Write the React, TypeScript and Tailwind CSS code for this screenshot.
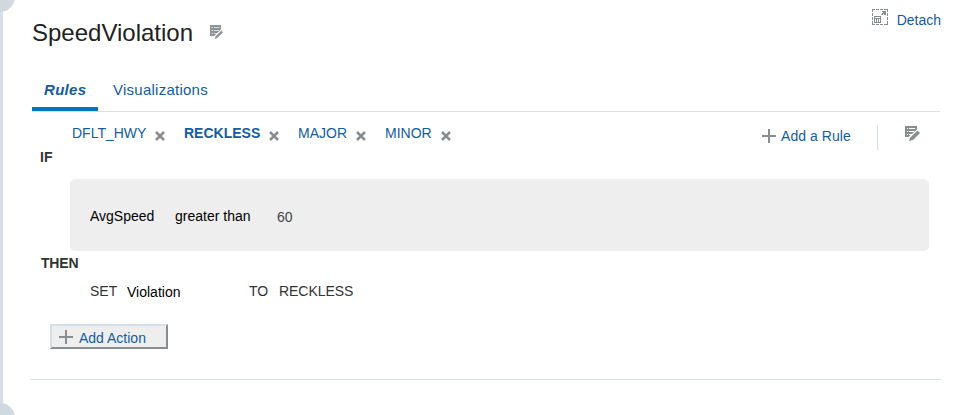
import React from "react";

function EditIcon({ className }: { className?: string }) {
  return (
    <svg className={className} viewBox="0 0 15 15" fill="none">
      <path d="M0 0H12V5L5 11H0Z" fill="#878d91" />
      <path d="M2 2.5h1M4 2.5h6M2 5.5h1M4 5.5h5M2 8.5h1M4 8.5h3" stroke="#fff" strokeWidth="1" />
      <path d="M12.2 3.2L15.6 6.4L8 15H3V11.5Z" fill="#fff" />
      <path d="M12.6 4.6L15 7L8 14L4 15L5 11.8Z" fill="#878d91" />
    </svg>
  );
}

function TitleEditIcon({ className }: { className?: string }) {
  return (
    <svg className={className} viewBox="0 0 13 14" fill="none">
      <path d="M0 0H11V5L5 11H0Z" fill="#8f9497" />
      <path d="M1.5 2.5h1.5M4 2.5h5.5M1.5 5.5h1.5M4 5.5h5M1.5 8.5h1.5M4 8.5h3" stroke="#d5d8da" strokeWidth="1" />
      <path d="M12 3.6L14 6L7.5 14H3.6V11.5Z" fill="#fff" />
      <path d="M11.4 5.6L13 7.2L7 13.2L4.8 14L5.4 11.6Z" fill="#8f9497" />
    </svg>
  );
}

function DetachIcon() {
  return (
    <svg className="h-4 w-4 shrink-0" viewBox="0 0 16 16" fill="#878d91" shapeRendering="crispEdges">
      <path d="M0 0h3v1H1v2H0ZM4 0h3v1H4ZM8 0h3v1H8ZM12 0h4v3h-1V1h-3ZM0 4h1v3H0ZM0 8h1v3H0ZM15 4h1v3h-1ZM15 8h1v3h-1ZM0 12h1v3h2v1H0ZM4 15h3v1H4ZM8 15h3v1H8ZM15 12h1v4h-4v-1h3Z" />
      <path fillRule="evenodd" d="M2 7h7v7H2ZM3 8v1h5V8ZM3 10v3h1v-3ZM5 10v3h1v-3ZM7 10v3h1v-3Z" />
      <path d="M10 2h4v4h-2V5h-1v1H9V5h1V4h1V3h-1Z" />
    </svg>
  );
}

function CloseIcon() {
  return (
    <svg className="mt-2 h-[10px] w-[10px] shrink-0" viewBox="0 0 10 10">
      <path d="M1 1L9 9M9 1L1 9" stroke="#878d91" strokeWidth="2.5" />
    </svg>
  );
}

function PlusIcon() {
  return (
    <svg className="h-[14px] w-[14px] shrink-0" viewBox="0 0 14 14" shapeRendering="crispEdges">
      <path d="M6 0h2v14H6ZM0 6h14v2H0Z" fill="#878d91" />
    </svg>
  );
}

function RuleTab({ name, width, active }: { name: string; width: string; active?: boolean }) {
  return (
    <div className="flex shrink-0 items-start">
      <span className={`${width} whitespace-nowrap ${active ? "font-bold" : ""}`}>{name}</span>
      <CloseIcon />
    </div>
  );
}

export default function App() {
  return (
    <div className="flex h-[415px] w-[957px] overflow-hidden bg-white font-['Liberation_Sans',Arial,sans-serif] text-sm leading-5 text-[#333]">
      <div className="relative w-[3px] shrink-0 bg-[#d6dfe6]">
        <div className="absolute -top-[18px] -left-[15px] h-[30px] w-[30px] rounded-full bg-[#d0d9df]" />
        <div className="absolute top-[403px] -left-[15px] h-[30px] w-[30px] rounded-full bg-[#d0d9df]" />
      </div>
      <main className="flex w-[938px] flex-col pl-7">
        <header className="flex h-[72px] items-start justify-between">
          <div className="flex pt-[17px] pl-px">
            <h1 className="w-[178px] text-2xl leading-8 text-[#222]">SpeedViolation</h1>
            <TitleEditIcon className="mt-2 h-[14px] w-[13px]" />
          </div>
          <div className="flex items-start pt-[9px] text-[#145c9e]">
            <DetachIcon />
            <a className="mt-px ml-[9px]">Detach</a>
          </div>
        </header>
        <nav className="mr-px ml-px flex h-10 border-b border-[#d6dfe6] text-[15px] text-[#145c9e]">
          <a className="h-[39px] w-[66px] border-b-4 border-[#0075c4] pt-2 pl-3 font-bold tracking-[0.3px] italic">Rules</a>
          <a className="pt-2 pl-[15px] tracking-[0.25px]">Visualizations</a>
        </nav>
        <div className="flex h-[35px] items-start pt-[11px] pl-[41px] text-[#145c9e]">
          <div className="flex w-[690px] gap-[19px]">
            <RuleTab name="DFLT_HWY" width="w-[83px]" />
            <RuleTab name="RECKLESS" width="w-[85px]" active />
            <RuleTab name="MAJOR" width="w-[58px]" />
            <RuleTab name="MINOR" width="w-[56px]" />
          </div>
          <div className="flex w-[115px] items-center gap-[5px] pt-[3px]">
            <PlusIcon />
            <a className="tracking-[0.05px]">Add a Rule</a>
          </div>
          <div className="mt-[2px] h-[25px] w-px bg-[#d6dfe6]" />
          <EditIcon className="mt-[3px] ml-[27px] h-[15px] w-[15px]" />
        </div>
        <strong className="ml-[9px] h-8">IF</strong>
        <section className="ml-[39px] flex h-[72px] w-[859px] items-start rounded-[5px] bg-[#eee] pt-[27px] pl-5 text-black">
          <span className="w-[85px]">AvgSpeed</span>
          <span className="w-[102px]">greater than</span>
          <span className="mt-px text-[#444]">60</span>
        </section>
        <strong className="mt-[2px] ml-[10px] h-5 tracking-[-0.2px]">THEN</strong>
        <div className="mt-2 ml-[59px] flex h-[21px]">
          <span className="w-[37px]">SET</span>
          <span className="mt-px w-[122px] text-black">Violation</span>
          <span className="w-[30px]">TO</span>
          <span className="tracking-[-0.05px]">RECKLESS</span>
        </div>
        <button className="mt-[22px] ml-[19px] flex h-[25px] w-[118px] items-center gap-[6px] border-2 border-t-[#d6dfe6] border-r-[#878d91] border-b-[#878d91] border-l-[#d6dfe6] bg-[#eee] pl-[7px] text-[#145c9e]">
          <PlusIcon />
          <span className="pt-[3px]">Add Action</span>
        </button>
        <div className="mt-[30px] h-px w-[910px] bg-[#d6dfe6]" />
      </main>
    </div>
  );
}
